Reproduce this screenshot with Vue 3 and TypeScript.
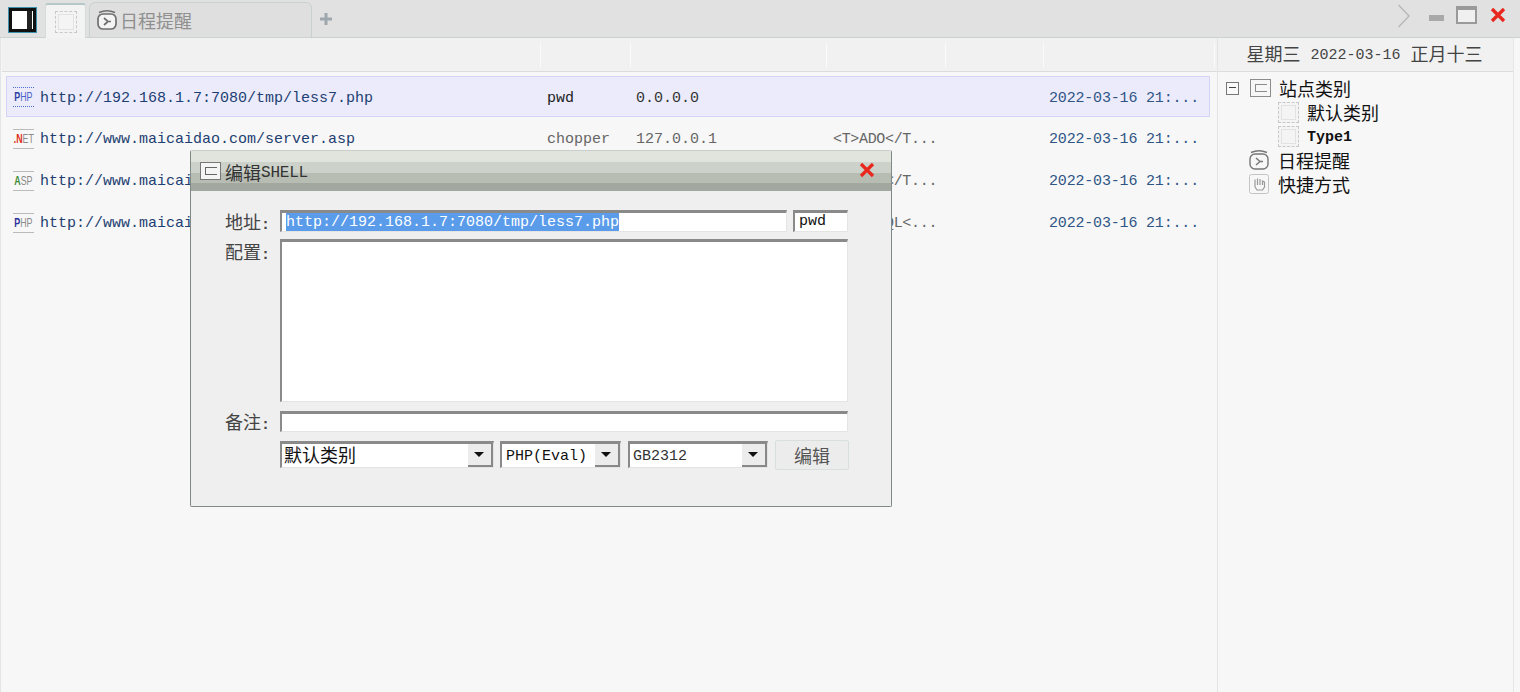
<script setup lang="ts">
interface Shell {
  kind: string
  head: string
  tail: string
  color: string
  url: string
  pass: string
  ip: string
  note: string
  date: string
  active?: boolean
}

const shells: Shell[] = [
  { kind: 'php', head: 'P', tail: 'HP', color: '#2b3fa8', url: 'http://192.168.1.7:7080/tmp/less7.php', pass: 'pwd', ip: '0.0.0.0', note: '', date: '2022-03-16 21:...', active: true },
  { kind: 'net', head: '.N', tail: 'ET', color: '#e03020', url: 'http://www.maicaidao.com/server.asp', pass: 'chopper', ip: '127.0.0.1', note: '<T>ADO</T...', date: '2022-03-16 21:...' },
  { kind: 'asp', head: 'A', tail: 'SP', color: '#3f8a35', url: 'http://www.maicaidao.com/server.aspx', pass: 'chopper', ip: '127.0.0.1', note: '<T>ADO</T...', date: '2022-03-16 21:...' },
  { kind: 'php', head: 'P', tail: 'HP', color: '#2b2f9a', url: 'http://www.maicaidao.com/server.php', pass: 'chopper', ip: '127.0.0.1', note: '<T>MYSQL<...', date: '2022-03-16 21:...' }
]

const columns = [535, 90, 196, 119, 98, 171]
</script>

<template>
  <div class="app">
    <header class="tabbar">
      <div class="toggle"><span></span></div>
      <div class="tab tab-active"><i class="dashed big"></i></div>
      <div class="tab tab-idle">
        <svg class="clock" width="22" height="22" viewBox="0 0 22 22" fill="none" stroke="#6f6f6f" stroke-width="1.7">
          <path d="M3 3.5 Q11 0 19 3.5" />
          <rect x="2" y="5" width="18" height="15" rx="5" fill="#f4f4f4" />
          <path d="M8 9l4 3.5-4 3.5M12 12.5h3" />
        </svg>
        <span class="cjk">日程提醒</span>
      </div>
      <div class="plus">
        <svg width="14" height="14" viewBox="0 0 14 14"><path d="M7 1v12M1 7h12" stroke="#9fa8ae" stroke-width="3" /></svg>
      </div>
      <div class="winctl">
        <svg class="chev" width="14" height="26" viewBox="0 0 14 26" fill="none"><path d="M1.5 2l10.5 11L1.5 24" stroke="#b8b8b8" stroke-width="1.4" /></svg>
        <span class="min"></span>
        <span class="max"></span>
        <svg class="close" width="16" height="16" viewBox="0 0 16 16"><path d="M2 2l12 12M14 2L2 14" stroke="#e8281e" stroke-width="3.4" /></svg>
      </div>
    </header>

    <div class="content">
      <main class="list">
        <div class="thead">
          <div v-for="(w, i) in columns" :key="i" class="th" :style="{ width: w + 'px' }"></div>
        </div>
        <div class="rows">
          <div v-for="s in shells" :key="s.url" class="row" :class="{ active: s.active }">
            <div class="cell c-url">
              <span class="ficon"><span class="ftext"><b :style="{ color: s.color }">{{ s.head }}</b>{{ s.tail }}</span></span>
              <span class="url">{{ s.url }}</span>
            </div>
            <div class="cell c-pass">{{ s.pass }}</div>
            <div class="cell c-ip">{{ s.ip }}</div>
            <div class="cell c-note">{{ s.note }}</div>
            <div class="cell c-gap"></div>
            <div class="cell c-date">{{ s.date }}</div>
          </div>
        </div>
      </main>

      <aside class="side">
        <div class="side-head">
          <span class="cjk">星期三</span>
          <span class="mono">2022-03-16</span>
          <span class="cjk">正月十三</span>
        </div>
        <ul class="tree">
          <li class="node">
            <span class="minus"></span>
            <i class="box"><em></em></i>
            <span class="cjk">站点类别</span>
          </li>
          <li class="node child"><i class="dashed"></i><span class="cjk">默认类别</span></li>
          <li class="node child"><i class="dashed"></i><span class="mono type">Type1</span></li>
          <li class="node top">
            <svg width="22" height="22" viewBox="0 0 22 22" fill="none" stroke="#777" stroke-width="1.4">
              <path d="M3 3.5 Q11 0 19 3.5" />
              <rect x="2" y="5" width="18" height="15" rx="5" />
              <path d="M8 9l4 3.5-4 3.5M12 12.5h3" />
            </svg>
            <span class="cjk">日程提醒</span>
          </li>
          <li class="node top">
            <svg width="22" height="22" viewBox="0 0 22 22" fill="none">
              <rect x="1.5" y="1.5" width="19" height="19" rx="2" stroke="#c4c4c4" />
              <path d="M7 14V6.5M9.5 12V5.5M12 12V6M14.5 12V8l2 1v5l-2 3H9l-2-3" stroke="#999" stroke-width="1.2" />
            </svg>
            <span class="cjk">快捷方式</span>
          </li>
        </ul>
      </aside>
    </div>

    <section class="dialog">
      <div class="dlg-title">
        <i class="box light"><em></em></i>
        <span class="title-text"><span class="cjk">编辑</span><span class="mono title-latin">SHELL</span></span>
        <svg class="dlg-close" width="16" height="16" viewBox="0 0 16 16"><path d="M2 2l12 12M14 2L2 14" stroke="#e8281e" stroke-width="3.2" /></svg>
      </div>
      <div class="form">
        <label class="cjk lab">地址<span class="colon">:</span></label>
        <div class="line">
          <div class="field grow"><span class="selected mono">http://192.168.1.7:7080/tmp/less7.php</span></div>
          <div class="field pass mono">pwd</div>
        </div>
        <label class="cjk lab lab-config">配置<span class="colon">:</span></label>
        <div class="field area"></div>
        <label class="cjk lab lab-note">备注<span class="colon">:</span></label>
        <div class="field note"></div>
        <span></span>
        <div class="line selects">
          <div class="combo w1"><span class="cjk">默认类别</span><span class="arrow"></span></div>
          <div class="combo w2"><span class="mono">PHP(Eval)</span><span class="arrow"></span></div>
          <div class="combo w3"><span class="mono gb">GB2312</span><span class="arrow"></span></div>
          <button class="btn cjk" type="button">编辑</button>
        </div>
      </div>
    </section>
  </div>
</template>

<style>
html,
body {
  margin: 0;
  background: #f7f7f7;
}
</style>

<style scoped>
.app {
  position: relative;
  width: 1520px;
  height: 692px;
  overflow: hidden;
  background: #f7f7f7;
  font-family: "Liberation Mono", "Noto Sans CJK SC", monospace;
  font-size: 15px;
  color: #222;
}

.cjk {
  font-family: "Noto Sans CJK SC", sans-serif;
  font-size: 18px;
  line-height: 24px;
}

.mono {
  font-family: "Liberation Mono", monospace;
  font-size: 15px;
}

/* top bar */
.tabbar {
  display: flex;
  align-items: flex-end;
  height: 37px;
  padding-left: 9px;
  background: #e1e1e1;
  border-bottom: 1px solid #ccd2d2;
}

.toggle {
  box-sizing: border-box;
  align-self: flex-start;
  width: 27px;
  height: 24px;
  margin-top: 8px;
  margin-right: 9px;
  padding-right: 1px;
  background: #fff;
  border: 3px solid #111;
  outline: 1px solid #3d93ad;
  display: flex;
  justify-content: flex-end;
}

.toggle span {
  width: 5px;
  background: #222;
}

.tab {
  box-sizing: border-box;
  display: flex;
  align-items: center;
  border-radius: 3px 3px 0 0;
}

.tab-active {
  justify-content: center;
  width: 41px;
  height: 35px;
  margin-bottom: -1px;
  background: #f3f3f3;
  border: 1px solid #d5dada;
  border-top: 2px solid #b5c8c8;
  border-bottom: none;
}

.tab-idle {
  width: 223px;
  height: 35px;
  margin-left: 3px;
  padding-left: 6px;
  gap: 2px;
  color: #8f8f8f;
  background: #dfdfdf;
  border: 1px solid #c9d0d0;
  border-bottom: none;
  border-radius: 6px 6px 0 0;
}

.plus {
  display: flex;
  align-self: center;
  margin-left: 7px;
}

.winctl {
  display: flex;
  align-items: center;
  margin-left: auto;
  padding-right: 14px;
  align-self: flex-start;
  height: 32px;
}

.chev {
  margin-right: 18px;
}

.min {
  width: 15px;
  height: 6px;
  background: #a9a9a9;
  margin-right: 12px;
  margin-top: 4px;
}

.max {
  box-sizing: border-box;
  width: 21px;
  height: 18px;
  background: #f0f0f0;
  border: 2px solid #9a9a9a;
  border-top-width: 4px;
  margin-right: 13px;
  margin-top: -2px;
}

.close {
  margin-top: -2px;
}

/* dashed & box icons */
.dashed {
  box-sizing: border-box;
  display: inline-block;
  width: 21px;
  height: 21px;
  border: 1px dashed #c8c8c8;
  background: #f4f4f4;
  box-shadow: inset 0 0 0 2px #f4f4f4, inset 0 0 0 3px #e2e2e2;
  flex: none;
}

.dashed.big {
  width: 22px;
  height: 22px;
}

.box {
  box-sizing: border-box;
  display: inline-flex;
  align-items: center;
  justify-content: flex-start;
  width: 21px;
  height: 18px;
  padding-left: 4px;
  border: 1.5px solid #8c8c8c;
  flex: none;
}

.box em {
  box-sizing: border-box;
  display: block;
  width: 12px;
  height: 8px;
  border: 1.5px solid #8c8c8c;
  border-right: none;
}

.box.light {
  background: #f4f4f4;
  border-color: #777;
}

.box.light em {
  border-color: #666;
}

/* main area */
.content {
  display: flex;
  height: 654px;
}

.list {
  box-sizing: border-box;
  width: 1217px;
  padding-left: 1px;
  border-left: 1px solid #e2e5e5;
}

.thead {
  display: flex;
  height: 33px;
  padding-left: 4px;
  background: #f1f1f1;
  border-bottom: 1px solid #dcdcdc;
}

.th {
  box-sizing: border-box;
  height: 25px;
  margin-top: 5px;
  border-right: 1px solid #fafafa;
}

.rows {
  padding: 4px 7px 0 4px;
}

.row {
  box-sizing: border-box;
  display: flex;
  align-items: center;
  height: 42px;
  border: 1px solid transparent;
  color: #666;
}

.row.active {
  height: 41px;
  margin-bottom: 1px;
  background: #ebebfb;
  border-color: #d4d4f5;
  color: #222;
}

.cell {
  box-sizing: border-box;
  flex: none;
  white-space: pre;
}

.url,
.c-pass,
.c-ip,
.c-note,
.c-date {
  padding-top: 1px;
}

.row.active .url,
.row.active .c-pass,
.row.active .c-ip,
.row.active .c-date {
  padding-top: 3px;
}

.c-url {
  display: flex;
  align-items: center;
  width: 540px;
  padding-left: 6px;
  gap: 6px;
}

.url {
  color: #1e3f72;
}

.c-pass {
  width: 89px;
}

.c-ip {
  width: 197px;
}

.row.active .c-ip {
  color: #333;
}

.c-note {
  width: 120px;
  letter-spacing: -0.33px;
}

.c-gap {
  width: 96px;
}

.c-date {
  width: 160px;
  letter-spacing: -0.18px;
  color: #2f5585;
}

.ficon {
  box-sizing: border-box;
  display: flex;
  justify-content: center;
  width: 21px;
  height: 20px;
  border-top: 1px solid #bbb;
  border-bottom: 1px solid #bbb;
  color: #8a8a8a;
}

.ftext {
  flex: none;
  font-family: "Liberation Sans", sans-serif;
  font-size: 13px;
  line-height: 18px;
  white-space: nowrap;
  transform: scaleX(0.68);
}

.ftext b {
  font-weight: 700;
}

.row.active .ficon {
  border-top: 1px dotted #4e6fd0;
  border-bottom: 1px dotted #4e6fd0;
  color: #4a62c8;
}

/* right panel */
.side {
  box-sizing: border-box;
  flex: 1;
  margin-right: 6px;
  border-left: 1px solid #e2e5e5;
  border-right: 1px solid #e6e6e6;
}

.side-head {
  display: flex;
  align-items: center;
  justify-content: center;
  gap: 10px;
  height: 33px;
  padding-right: 2px;
  background: #f1f1f1;
  border-bottom: 1px solid #dcdcdc;
  color: #444;
}

.side-head .cjk {
  margin-top: -3px;
}

.side-head .mono {
  margin-top: 1px;
}

.tree {
  list-style: none;
  margin: 0;
  padding: 4px 0 0 8px;
  color: #111;
}

.node {
  display: flex;
  align-items: center;
  height: 24px;
  gap: 8px;
}

.minus {
  box-sizing: border-box;
  position: relative;
  width: 13px;
  height: 13px;
  margin-right: 3px;
  border: 1.5px solid #777;
  background: #fafafa;
}

.minus::after {
  content: "";
  position: absolute;
  left: 2px;
  right: 2px;
  top: 4px;
  height: 1.5px;
  background: #444;
}

.child {
  padding-left: 52px;
}

.top {
  padding-left: 22px;
}

.type {
  font-weight: 700;
  margin-top: 2px;
}

/* dialog */
.dialog {
  position: absolute;
  left: 190px;
  top: 150px;
  box-sizing: border-box;
  width: 702px;
  height: 357px;
  background: #efefef;
  border: 1px solid #7f8a86;
  border-top-color: #c9d0cb;
  border-radius: 2px;
}

.dlg-title {
  display: flex;
  align-items: center;
  height: 40px;
  padding-left: 9px;
  gap: 4px;
  color: #333;
  background: linear-gradient(#e0e4dd 0, #e0e4dd 11px, #ccd1c9 11px, #ccd1c9 22px, #b8bdb4 22px, #b8bdb4 32px, #a2a8a0 32px);
}

.title-text {
  display: flex;
  align-items: center;
  margin-top: 2px;
}

.title-latin {
  margin-top: 2px;
  font-size: 16px;
  letter-spacing: -0.2px;
}

.dlg-close {
  margin-left: auto;
  margin-right: 16px;
  margin-top: -2px;
}

.form {
  display: grid;
  grid-template-columns: 79px 568px;
  grid-template-rows: 22px 165px 21px 29px;
  column-gap: 10px;
  row-gap: 7px;
  padding-top: 19px;
}

.lab {
  color: #444;
  text-align: right;
  line-height: 22px;
}

.lab-config {
  padding-top: 1px;
}

.lab-note {
  line-height: 20px;
}

.colon {
  display: inline-block;
  width: 9px;
  line-height: 1;
  font-family: "Liberation Mono", monospace;
  font-weight: 700;
  font-size: 15px;
}

.line {
  display: flex;
  gap: 6px;
}

.field {
  box-sizing: border-box;
  height: 22px;
  background: #fff;
  border-top: 3px solid #8a8a8a;
  border-left: 2px solid #8a8a8a;
  border-right: 1px solid #e4e4e4;
  border-bottom: 1px solid #e4e4e4;
  line-height: 18px;
  overflow: hidden;
}

.grow {
  flex: 1;
  padding-left: 4px;
}

.selected {
  display: inline-block;
  background: #5a9bea;
  color: #fff;
  height: 19px;
  line-height: 19px;
}

.pass {
  width: 55px;
  padding-left: 4px;
  color: #111;
}

.area {
  height: 163px;
}

.note {
  height: 21px;
}

.selects {
  gap: 6px;
  align-items: stretch;
  height: 27px;
  margin-top: 2px;
}

.combo {
  box-sizing: border-box;
  position: relative;
  flex: none;
  height: 27px;
  padding-left: 2px;
  line-height: 21px;
  background: #fff;
  border-top: 3px solid #8a8a8a;
  border-left: 2px solid #8a8a8a;
  border-right: 1px solid #e4e4e4;
  border-bottom: 1px solid #e4e4e4;
  color: #111;
  white-space: nowrap;
}

.combo .cjk {
  line-height: 21px;
}

.combo .mono {
  margin-left: 2px;
  line-height: 25px;
}

.combo .gb {
  color: #333;
  margin-left: 1px;
}

.w1 {
  width: 214px;
}

.w2 {
  width: 121px;
  margin-right: 1px;
}

.w3 {
  width: 140px;
}

.arrow {
  position: absolute;
  right: 0;
  top: 0;
  box-sizing: border-box;
  width: 25px;
  height: 23px;
  background: #ececec;
  border-right: 2px solid #888;
  border-bottom: 2px solid #888;
}

.arrow::after {
  content: "";
  position: absolute;
  left: 6px;
  top: 8px;
  border-left: 5px solid transparent;
  border-right: 5px solid transparent;
  border-top: 5px solid #111;
}

.btn {
  box-sizing: border-box;
  flex: none;
  width: 74px;
  height: 30px;
  margin-top: -1px;
  margin-left: 1px;
  padding: 0;
  background: #ececec;
  border: 1px solid #d8dfdd;
  border-radius: 2px;
  color: #555;
}
</style>
